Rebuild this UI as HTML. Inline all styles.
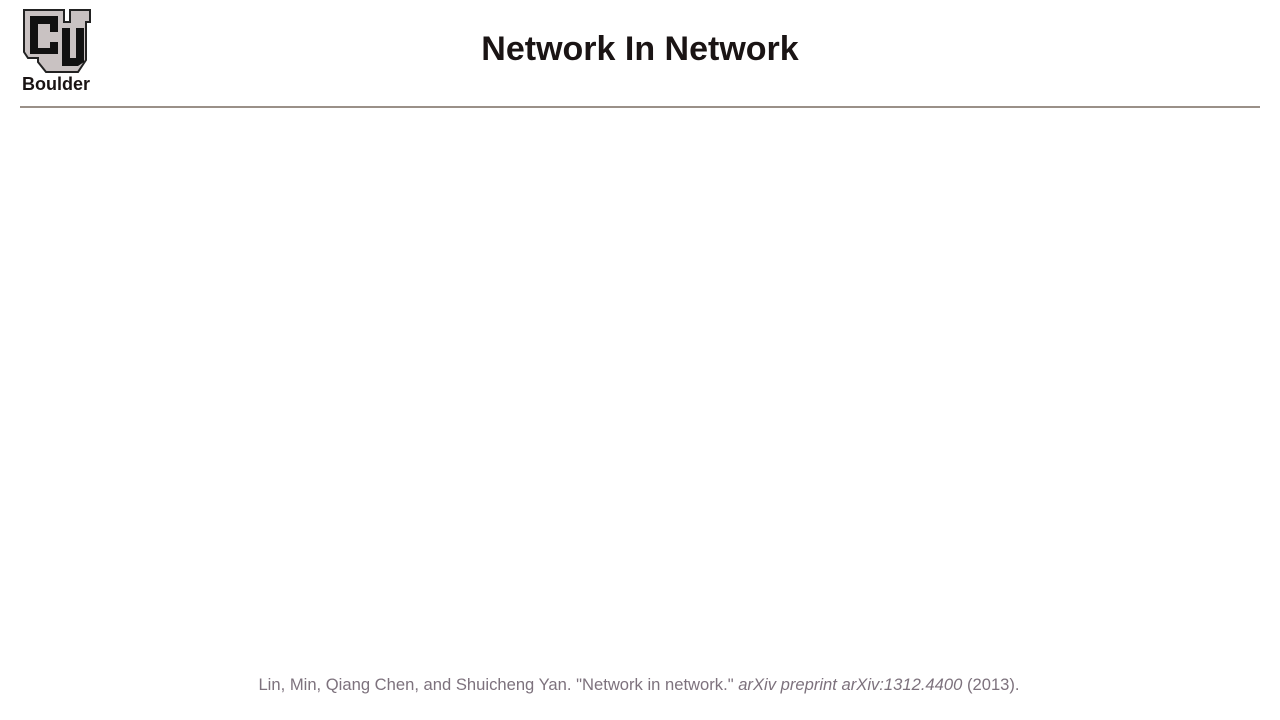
<!DOCTYPE html>
<html><head><style>
body{margin:0;width:1280px;height:720px;background:#fff;font-family:"Liberation Sans",sans-serif;position:relative;overflow:hidden}
.t{position:absolute;left:0;width:1280px;top:30px;text-align:center;font-weight:bold;font-size:34px;color:#1a1414}
.line{position:absolute;left:20px;width:1240px;top:106px;height:2px;background:#9a9088}
.f{position:absolute;left:0;width:1278px;top:675px;text-align:center;font-size:16.6px;color:#7d727d}
.b{position:absolute;left:22px;top:74px;font-weight:bold;font-size:18px;color:#1a1414}
</style></head><body>
<svg style="position:absolute;left:22px;top:8px" width="70" height="66" viewBox="0 0 70 66">
<path d="M2 2H42V14H48V2H68V14H64V52L56 64H24L16 54V50H6L2 44Z" fill="#c9c2c2" stroke="#222" stroke-width="2"/>
<path d="M8 8H36V24H28V16H16V40H28V34H36V46H8Z" fill="#111"/>
<path d="M40 20H48V50H54V20H62V54L56 58H40Z" fill="#111"/>
</svg>
<div class="b">Boulder</div>
<div class="t">Network In Network</div>
<div class="line"></div>
<div class="f">Lin, Min, Qiang Chen, and Shuicheng Yan. "Network in network." <i>arXiv preprint arXiv:1312.4400</i> (2013).</div>
</body></html>
